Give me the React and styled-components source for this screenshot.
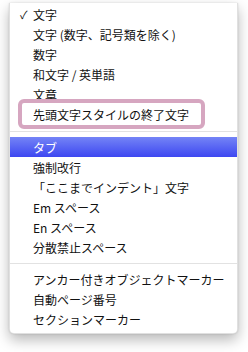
import React from 'react'
import styled, { createGlobalStyle } from 'styled-components'

const Global = createGlobalStyle`
  html, body {
    margin: 0;
    padding: 0;
    background: #ffffff;
  }
  body {
    font-family: "Noto Sans CJK JP", "Noto Sans", sans-serif;
    -webkit-font-smoothing: antialiased;
  }
`

const Stage = styled.div`
  width: 248px;
  height: 352px;
  padding: 3px 10px 0 9px;
  box-sizing: border-box;
  overflow: hidden;
`

const Menu = styled.div`
  width: 229px;
  padding: 1px 0 4px;
  background: #ffffff;
  border: 1px solid rgba(0, 0, 0, 0.12);
  border-top: none;
  border-radius: 0 0 5px 5px;
  box-shadow: 0 6px 14px rgba(0, 0, 0, 0.28), 0 0 2px rgba(0, 0, 0, 0.15);
  box-sizing: border-box;
`

const Item = styled.div`
  position: relative;
  display: flex;
  align-items: center;
  height: 20px;
  padding-left: 10px;
  font-size: 12px;
  color: ${p => (p.$active ? '#ffffff' : '#111111')};
  background: ${p =>
    p.$active ? 'linear-gradient(#7484f6, #3d47f1)' : 'transparent'};
  white-space: nowrap;
`

const Check = styled.span`
  width: 13px;
  flex: none;
  font-size: 11px;
  color: #111;
`

const Marker = styled.div`
  position: absolute;
  left: 8px;
  top: -5px;
  width: 187px;
  height: 30px;
  border: 4px solid #d6a6c0;
  border-radius: 6px;
  box-sizing: border-box;
  pointer-events: none;
`

const Separator = styled.div`
  height: 1px;
  margin: ${p => p.$m};
  background: #e2e2e2;
`

const groups = [
  [
    { label: '文字', checked: true },
    { label: '文字 (数字、記号類を除く)' },
    { label: '数字' },
    { label: '和文字 / 英単語' },
    { label: '文章' },
    { label: '先頭文字スタイルの終了文字', marked: true },
  ],
  [
    { label: 'タブ', active: true },
    { label: '強制改行' },
    { label: '「ここまでインデント」文字' },
    { label: 'Em スペース' },
    { label: 'En スペース' },
    { label: '分散禁止スペース' },
  ],
  [
    { label: 'アンカー付きオブジェクトマーカー' },
    { label: '自動ページ番号' },
    { label: 'セクションマーカー' },
  ],
]

export default function App() {
  return (
    <Stage>
      <Global />
      <Menu>
        {groups.map((items, gi) => (
          <React.Fragment key={gi}>
            {gi > 0 && <Separator $m={gi === 1 ? '7px 0 5px' : '6px 0 5px'} />}
            {items.map(it => (
              <Item key={it.label} $active={it.active}>
                <Check>{it.checked ? '✓' : ''}</Check>
                {it.label}
                {it.marked && <Marker />}
              </Item>
            ))}
          </React.Fragment>
        ))}
      </Menu>
    </Stage>
  )
}
